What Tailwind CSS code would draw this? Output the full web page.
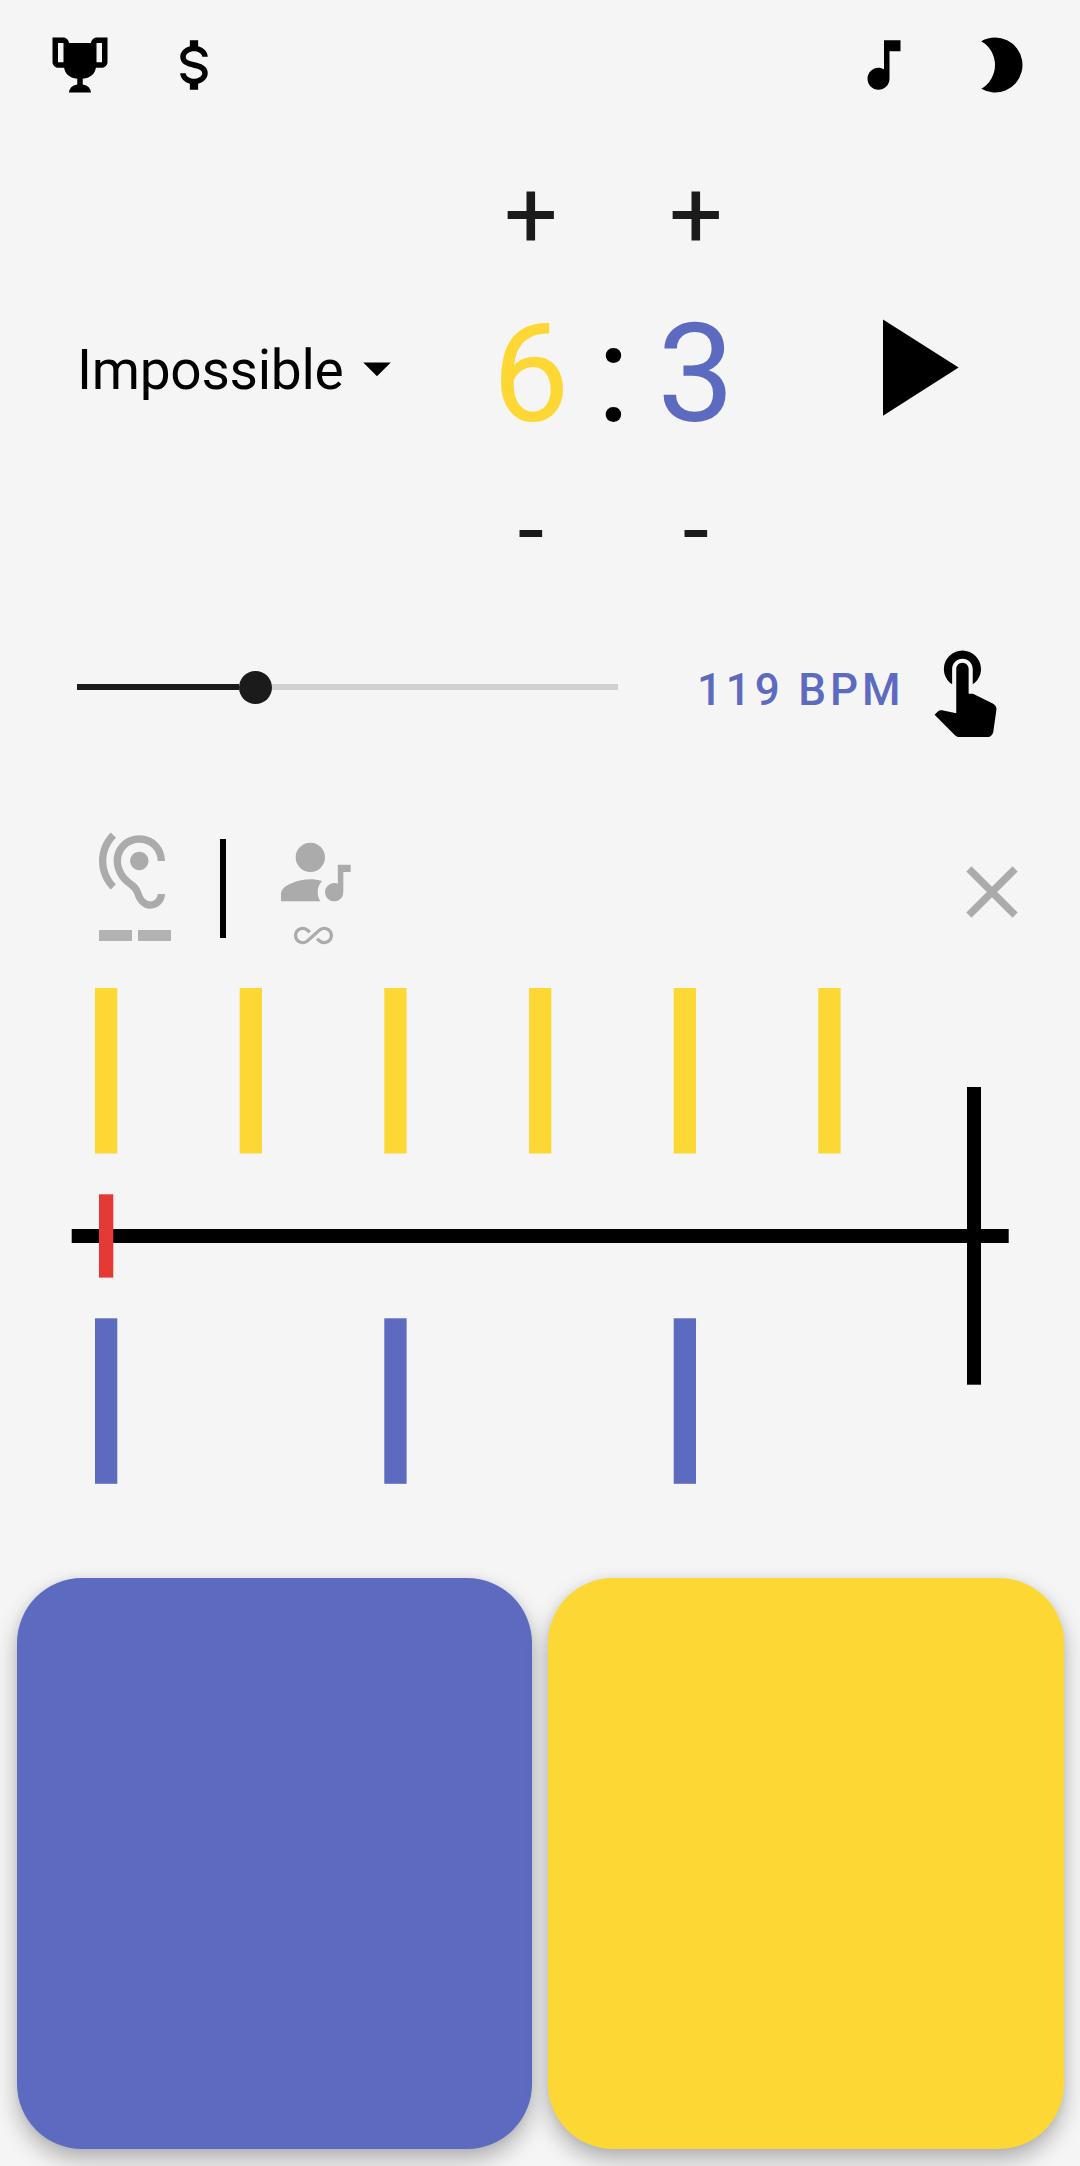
<!DOCTYPE html>
<html lang="en">
<head>
<meta charset="utf-8">
<title>Polyrhythm Trainer</title>
<script src="https://cdn.jsdelivr.net/npm/@tailwindcss/browser@4"></script>
</head>
<body class="bg-[#f5f5f5]">
<main class="flex h-[2166px] w-[1080px] flex-col overflow-hidden bg-[#f5f5f5] font-['Roboto',sans-serif] text-black">

  <header class="flex h-[134px] shrink-0 items-start pt-[31.5px] pr-[52.5px] pl-[46.5px]">
    <svg class="size-[66px]" viewBox="0 0 24 24"><path d="M20.2 2H18C17.1 2 16 3 16 4H8C8 3 6.9 2 6 2H2V11C2 12 3 13 4 13H6.2C6.6 15 7.9 16.7 11 17V19.08C8 19.54 8 22 8 22H16C16 22 16 19.54 13 19.08V17C16.1 16.7 17.4 15 17.8 13H20C21 13 22 12 22 11V2ZM4 11V4H6V11ZM20 11H18V4H20Z"/></svg>
    <svg class="ml-[48.5px] size-[66px]" viewBox="0 0 24 24"><path d="M7,15H9C9,16.08 10.37,17 12,17C13.63,17 15,16.08 15,15C15,13.9 13.96,13.5 11.76,12.97C9.64,12.44 7,11.78 7,9C7,7.21 8.47,5.69 10.5,5.18V3H13.5V5.18C15.53,5.69 17,7.21 17,9H15C15,7.92 13.63,7 12,7C10.37,7 9,7.92 9,9C9,10.1 10.04,10.5 12.24,11.03C14.36,11.56 17,12.22 17,15C17,16.79 15.53,18.31 13.5,18.82V21H10.5V18.82C8.47,18.31 7,16.79 7,15Z"/></svg>
    <svg class="ml-auto size-[66px]" viewBox="0 0 24 24"><path d="M12 3v10.55c-.59-.34-1.27-.55-2-.55-2.21 0-4 1.79-4 4s1.79 4 4 4 4-1.79 4-4V7h4V3h-6z"/></svg>
    <svg class="ml-[44.5px] size-[66px]" viewBox="0 0 24 24"><path d="M12 2A10 10 0 0 0 7 3.34A10 10 0 0 1 7 20.66A10 10 0 1 0 12 2Z"/></svg>
  </header>

  <section class="flex h-[468px] shrink-0 items-center pl-[77px]">
    <div class="flex w-[388px] items-center">
      <span class="mt-[4px] text-[55px] leading-[66px] tracking-[-0.25px]">Impossible</span>
      <svg class="size-[66px]" viewBox="0 0 24 24"><path d="M7 10l5 5 5-5z"/></svg>
    </div>
    <div class="grid h-full w-[297px] grid-cols-[132px_33px_132px] grid-rows-[161px_159px_148px] text-center">
      <button class="text-[95px] leading-[161px] text-[#1b1b1b]">+</button>
      <span></span>
      <button class="text-[95px] leading-[161px] text-[#1b1b1b]">+</button>
      <span class="text-[137.5px] leading-[159px] text-[#fdd835]">6</span>
      <span class="flex justify-center text-[137.5px] leading-[159px]">:</span>
      <span class="text-[137.5px] leading-[159px] text-[#5c6bc0]">3</span>
      <button class="text-[95px] leading-[152px] text-[#1b1b1b]">-</button>
      <span></span>
      <button class="text-[95px] leading-[152px] text-[#1b1b1b]">-</button>
    </div>
    <svg class="mb-[1px] ml-[65.7px] size-[165px]" viewBox="0 0 24 24"><path d="M8 5v14l11-7z"/></svg>
  </section>

  <section class="flex h-[170px] shrink-0 items-center pl-[77px]">
    <div class="flex w-[541px] items-center">
      <div class="h-[6px] w-[161.5px] bg-[#1b1b1b]"></div>
      <div class="size-[33px] rounded-full bg-[#1b1b1b]"></div>
      <div class="h-[6px] flex-1 bg-[#d1d1d1]"></div>
    </div>
    <span class="mt-[6px] ml-[79px] w-[218px] text-[44px] leading-[52px] font-medium tracking-[3.85px] whitespace-nowrap text-[#5c6bc0]">119 BPM</span>
    <svg class="size-[99px]" viewBox="0 0 24 24"><path d="M9 11.24V7.5C9 6.12 10.12 5 11.5 5S14 6.12 14 7.5v3.74c1.21-.81 2-2.18 2-3.74C16 5.01 13.99 3 11.5 3S7 5.01 7 7.5c0 1.56.79 2.93 2 3.74zm9.84 4.63l-4.54-2.26c-.17-.07-.35-.11-.54-.11H13v-6c0-.83-.67-1.5-1.5-1.5S10 6.67 10 7.5v10.74l-3.43-.72c-.08-.01-.15-.03-.24-.03-.31 0-.59.13-.79.33l-.79.8 4.94 4.94c.27.27.65.44 1.06.44h6.79c.75 0 1.33-.55 1.44-1.28l.75-5.27c.01-.07.02-.14.02-.2 0-.62-.38-1.16-.91-1.38z"/></svg>
  </section>

  <section class="flex h-[178px] shrink-0 items-start pt-[56px] pl-[88px] text-[#ababab]">
    <div class="flex w-[132px] flex-col">
      <svg class="size-[88px]" viewBox="0 0 24 24" fill="currentColor"><path d="M17 20c-.29 0-.56-.06-.76-.15-.71-.37-1.21-.88-1.71-2.38-.51-1.56-1.47-2.29-2.39-3-.79-.61-1.61-1.24-2.32-2.53C9.29 10.98 9 9.93 9 9c0-2.8 2.2-5 5-5s5 2.2 5 5h2c0-3.93-3.07-7-7-7S7 5.07 7 9c0 1.26.38 2.65 1.07 3.9.91 1.65 1.98 2.48 2.85 3.15.81.62 1.39 1.07 1.71 2.05.6 1.82 1.37 2.84 2.73 3.55.51.23 1.07.35 1.64.35 2.21 0 4-1.79 4-4h-2c0 1.1-.9 2-2 2zM7.64 2.64L6.22 1.22C4.23 3.21 3 5.96 3 9s1.23 5.79 3.22 7.78l1.41-1.41C6.01 13.74 5 11.49 5 9s1.01-4.74 2.64-6.36zM11.5 9c0 1.38 1.12 2.5 2.5 2.5s2.5-1.12 2.5-2.5-1.12-2.5-2.5-2.5-2.5 1.12-2.5 2.5z"/></svg>
      <div class="mt-[14px] ml-[11px] flex gap-[6px]">
        <div class="h-[11px] w-[33px] bg-[#b2b2b2]"></div>
        <div class="h-[11px] w-[33px] bg-[#b2b2b2]"></div>
      </div>
    </div>
    <div class="mt-[11px] h-[99px] w-[6px] bg-black"></div>
    <div class="ml-[44px] flex w-[88px] flex-col items-center">
      <svg class="size-[88px]" viewBox="0 0 24 24" fill="currentColor"><path d="M11,14C12,14 13.05,14.16 14.2,14.44C13.39,15.31 13,16.33 13,17.5C13,18.39 13.25,19.23 13.78,20H3V18C3,16.81 3.91,15.85 5.74,15.12C7.57,14.38 9.33,14 11,14M11,12C9.92,12 9,11.61 8.18,10.83C7.38,10.05 7,9.11 7,8C7,6.92 7.38,6 8.18,5.18C9,4.38 9.92,4 11,4C12.11,4 13.05,4.38 13.83,5.18C14.61,6 15,6.92 15,8C15,9.11 14.61,10.05 13.83,10.83C13.05,11.61 12.11,12 11,12M18.5,10H22V12H20V17.5A2.5,2.5 0 0,1 17.5,20A2.5,2.5 0 0,1 15,17.5A2.5,2.5 0 0,1 17.5,15C17.86,15 18.19,15.07 18.5,15.21V10Z"/></svg>
      <svg class="mr-[1.5px] size-[39px]" viewBox="0 0 24 24" fill="currentColor"><path d="M18.6 6.62c-1.44 0-2.8.56-3.77 1.53L12 10.66 10.48 12h.01L7.8 14.39c-.64.64-1.49.99-2.4.99-1.87 0-3.39-1.51-3.39-3.38S3.53 8.62 5.4 8.62c.91 0 1.76.35 2.44 1.03l1.13 1 1.51-1.34L9.22 8.2C8.2 7.18 6.84 6.62 5.4 6.62 2.42 6.62 0 9.04 0 12s2.42 5.38 5.4 5.38c1.44 0 2.8-.56 3.77-1.53l2.83-2.5.01.01L13.52 12h-.01l2.69-2.39c.64-.64 1.49-.99 2.4-.99 1.87 0 3.39 1.51 3.39 3.38s-1.52 3.38-3.39 3.38c-.9 0-1.76-.35-2.44-1.03l-1.14-1.01-1.51 1.34 1.27 1.12c1.02 1.01 2.37 1.57 3.82 1.57 2.98 0 5.4-2.41 5.4-5.38s-2.42-5.37-5.4-5.37z"/></svg>
    </div>
    <svg class="mt-[20px] mr-[44px] ml-auto size-[88px]" viewBox="0 0 24 24" fill="currentColor"><path d="M19 6.41L17.59 5 12 10.59 6.41 5 5 6.41 10.59 12 5 17.59 6.41 19 12 13.41 17.59 19 19 17.59 13.41 12z"/></svg>
  </section>

  <!-- Beat timeline: upper voice, playhead, lower voice -->
  <svg class="h-[628px] w-[1080px] shrink-0" viewBox="0 950 1080 628">
    <g fill="#fdd835">
      <rect x="95" y="988" width="22.3" height="165.5"/>
      <rect x="239.7" y="988" width="22.3" height="165.5"/>
      <rect x="384.3" y="988" width="22.3" height="165.5"/>
      <rect x="529" y="988" width="22.3" height="165.5"/>
      <rect x="673.7" y="988" width="22.3" height="165.5"/>
      <rect x="818.3" y="988" width="22.3" height="165.5"/>
    </g>
    <rect x="71.7" y="1229" width="937" height="14"/>
    <rect x="967" y="1087" width="14" height="297.7"/>
    <rect x="99" y="1194.3" width="14.3" height="83.3" fill="#e53935"/>
    <g fill="#5c6bc0">
      <rect x="95" y="1318.3" width="22.3" height="165.5"/>
      <rect x="384.3" y="1318.3" width="22.3" height="165.5"/>
      <rect x="673.7" y="1318.3" width="22.3" height="165.5"/>
    </g>
  </svg>

  <section class="flex h-[588px] shrink-0 gap-[16px] pr-[16.5px] pb-[17px] pl-[16.5px]">
    <button aria-label="Left pad" class="flex-1 rounded-[65px] bg-[#5c6bc0] shadow-[0_11px_22px_rgba(0,0,0,0.28),0_0_8px_rgba(0,0,0,0.06)]"></button>
    <button aria-label="Right pad" class="flex-1 rounded-[65px] bg-[#fdd835] shadow-[0_11px_22px_rgba(0,0,0,0.28),0_0_8px_rgba(0,0,0,0.06)]"></button>
  </section>
</main>
</body>
</html>
